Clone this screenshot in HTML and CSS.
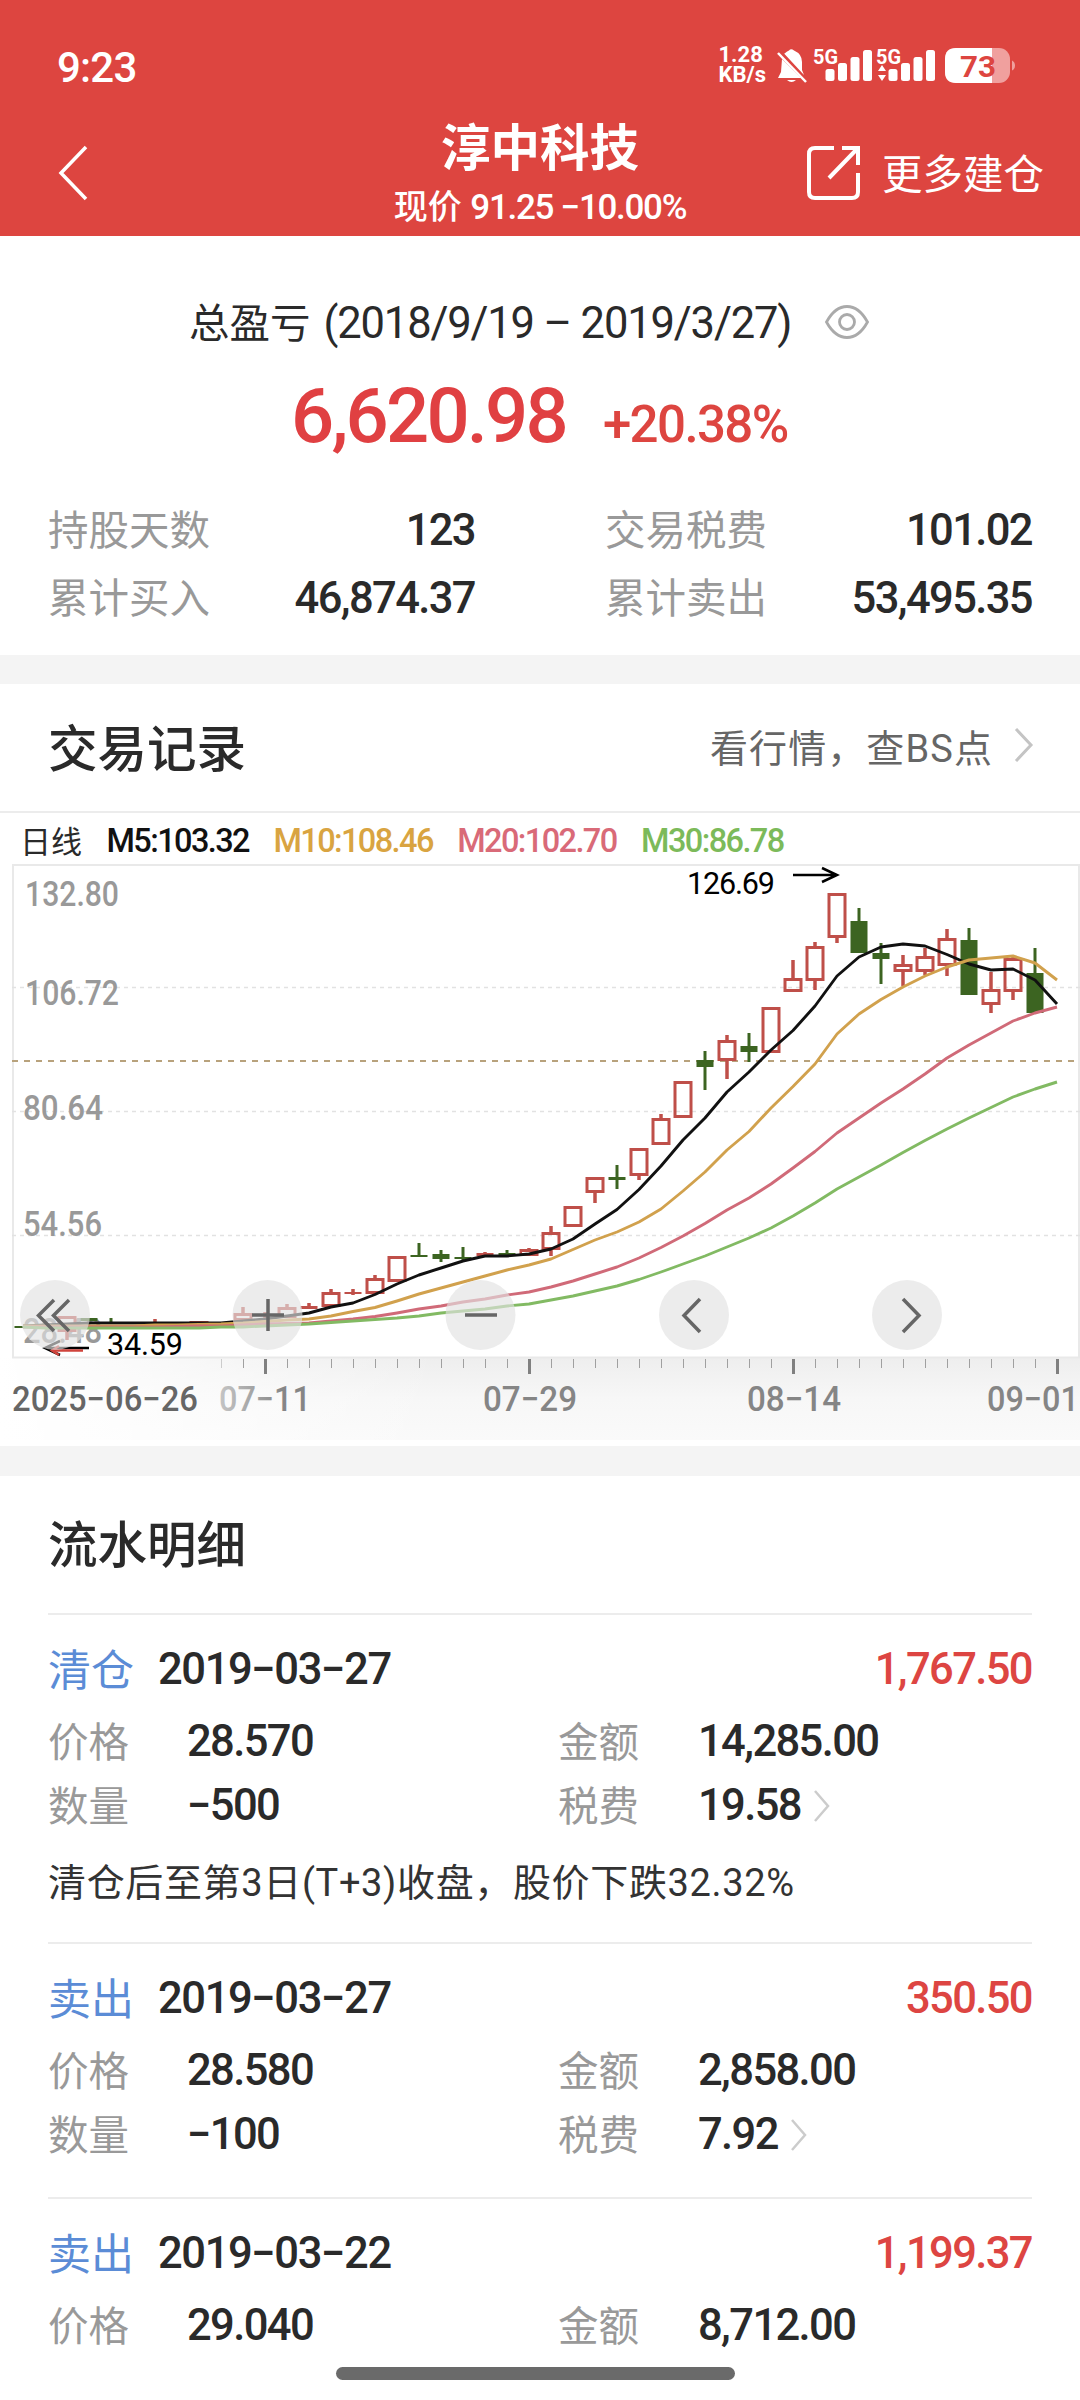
FILE: index.html
```
<!DOCTYPE html>
<html lang="zh-CN">
<head>
    <meta charset="UTF-8">
    <meta name="viewport" content="width=device-width, initial-scale=1.0">
    <title>淳中科技</title>
    <link rel="stylesheet" href="styles.css">
</head>
<body>

<header class="top">
    <div class="status">
        <span class="clock">9:23</span>
        <div class="status-icons">
            <div class="speed"><span>1.28</span><span>KB/s</span></div>
            <svg class="bell" width="32" height="36" viewBox="0 0 32 36">
                <path d="M8 6Q11 3 13 2.500Q15 0 18 2.500Q26 6 26 14V22L28 27L8.500 6Z" fill="#fff"/>
                <path d="M6 11L25 30H2L5 24Z" fill="#fff"/>
                <path d="M11 32H20Q15.500 36 11 32Z" fill="#fff"/>
                <path d="M2 5L30 34" stroke="#fff" stroke-width="2.500"/>
            </svg>
            <svg class="signal" width="126" height="36" viewBox="0 0 126 36" fill="#fff">
                <text class="net" x="1" y="16" textLength="25" lengthAdjust="spacingAndGlyphs">5G</text>
                <rect x="13.500" y="21" width="9" height="12" rx="2.500"/>
                <rect x="26" y="15" width="9" height="18" rx="2.500"/>
                <rect x="38.500" y="9" width="9" height="24" rx="2.500"/>
                <rect x="51" y="2" width="9" height="31" rx="2.500"/>
                <text class="net" x="64" y="16" textLength="25" lengthAdjust="spacingAndGlyphs">5G</text>
                <path d="M66 23L70 17L74 23ZM66 27L70 33L74 27Z"/>
                <rect x="76.500" y="21" width="9" height="12" rx="2.500"/>
                <rect x="89" y="15" width="9" height="18" rx="2.500"/>
                <rect x="101.500" y="9" width="9" height="24" rx="2.500"/>
                <rect x="114" y="2" width="9" height="31" rx="2.500"/>
            </svg>
            <svg class="battery" width="72" height="36" viewBox="0 0 72 36">
                <rect x="0" y="0" width="65" height="35" rx="11" fill="#f0a09e"/>
                <path d="M11 0H47V35H11Q0 35 0 24V11Q0 0 11 0Z" fill="#fff"/>
                <path d="M67 12.500Q70 14 70 17.500Q70 21 67 22.500Z" fill="#f0a09e"/>
                <text class="charge" x="15" y="28.500" textLength="36" lengthAdjust="spacingAndGlyphs">73</text>
            </svg>
        </div>
    </div>
    <div class="navbar">
        <svg class="back" width="36" height="56" viewBox="0 0 36 56" fill="none" stroke="#fff" stroke-width="3.500">
            <path d="M32 2L7 28L32 54"/>
        </svg>
        <div class="title">
            <h1>淳中科技</h1>
            <p>现价 <span class="quote">91.25 −10.00%</span></p>
        </div>
        <div class="more">
            <svg width="54" height="54" viewBox="0 0 54 54" fill="none" stroke="#fff" stroke-width="4">
                <path d="M27 2H8Q2 2 2 8V46Q2 52 8 52H45Q51 52 51 46V27"/>
                <path d="M35 2H51V19M50 3L22 32"/>
            </svg>
            <span>更多建仓</span>
        </div>
    </div>
</header>

<section class="summary">
    <div class="period">
        <span class="caption">总盈亏</span>
        <span class="range">(2018/9/19 – 2019/3/27)</span>
        <svg width="44" height="34" viewBox="0 0 44 34" fill="none" stroke="#aaa" stroke-width="2.800">
            <path d="M1.500 17Q10 1.500 22 1.500T42.500 17Q34 32.500 22 32.500T1.500 17Z"/>
            <circle cx="22" cy="17" r="7.500"/>
        </svg>
    </div>
    <div class="profit">
        <strong>6,620.98</strong>
        <span>+20.38%</span>
    </div>
    <div class="stats">
        <div class="stat"><span>持股天数</span><b>123</b></div>
        <div class="stat"><span>交易税费</span><b>101.02</b></div>
        <div class="stat"><span>累计买入</span><b>46,874.37</b></div>
        <div class="stat"><span>累计卖出</span><b>53,495.35</b></div>
    </div>
</section>

<section class="trades">
    <div class="section-head">
        <h2>交易记录</h2>
        <a class="market">看行情，查BS点
            <svg width="20" height="34" viewBox="0 0 20 34" fill="none" stroke="#c4c4c4" stroke-width="3"><path d="M2 1L17 17L2 33"/></svg>
        </a>
    </div>
    <div class="legend">
        <span class="kind">日线</span>
        <span class="m5">M5:103.32</span>
        <span class="m10">M10:108.46</span>
        <span class="m20">M20:102.70</span>
        <span class="m30">M30:86.78</span>
    </div>
    <svg class="chart" id="chart" width="1080" height="582" viewBox="0 864 1080 582">
        <defs>
            <linearGradient id="shade" x1="0" y1="0" x2="0" y2="1">
                <stop offset="0" stop-color="#eeeeee"/>
                <stop offset="0.500" stop-color="#f7f7f7"/>
                <stop offset="1" stop-color="#fafafa"/>
            </linearGradient>
            <linearGradient id="fade" x1="0" y1="0" x2="1" y2="0">
                <stop offset="0" stop-color="#fff"/>
                <stop offset="1" stop-color="#fff" stop-opacity="0"/>
            </linearGradient>
            <linearGradient id="label" gradientUnits="userSpaceOnUse" x1="220" y1="0" x2="285" y2="0">
                <stop offset="0" stop-color="#c4c4c4"/>
                <stop offset="1" stop-color="#858585"/>
            </linearGradient>
        </defs>
        <rect x="0" y="1358" width="1080" height="82" fill="url(#shade)"/>
        <rect x="0" y="1358" width="440" height="82" fill="url(#fade)"/>
        <rect x="13" y="865" width="1066" height="492.500" fill="none" stroke="#e9e9e9" stroke-width="2"/>
        <path class="grid" d="M12 987.500H1080M12 1111.500H1080M12 1235.500H1080"/>
        <path class="now" d="M12 1061H1078"/>
        <g class="scale">
            <text x="25" y="906" textLength="94" lengthAdjust="spacingAndGlyphs">132.80</text>
            <text x="25" y="1005" textLength="94" lengthAdjust="spacingAndGlyphs">106.72</text>
            <text x="23" y="1120" textLength="80" lengthAdjust="spacingAndGlyphs">80.64</text>
            <text x="23" y="1236" textLength="79" lengthAdjust="spacingAndGlyphs">54.56</text>
            <text x="23" y="1343" textLength="79" lengthAdjust="spacingAndGlyphs">28.48</text>
        </g>
        <g id="ticks"></g>
        <g id="candles"></g>
        <g id="lines" fill="none" stroke-width="2.900" stroke-linejoin="round"></g>
        <g class="extreme">
            <text x="687" y="894" textLength="88">126.69</text>
            <path d="M793 875H836M822 868L837 875L822 882"/>
            <path d="M89 1348H46M60 1341L45 1348L60 1355"/>
            <path class="sell-arrow" d="M83 1350.500H52M59 1346L52 1350.500L59 1355"/>
            <text x="107" y="1355" textLength="76">34.59</text>
        </g>
        <g class="dates">
            <text x="12" y="1411" textLength="186" lengthAdjust="spacingAndGlyphs" class="first">2025−06−26</text>
            <text x="219" y="1411" textLength="92" lengthAdjust="spacingAndGlyphs" fill="url(#label)">07−11</text>
            <text x="483" y="1411" textLength="94" lengthAdjust="spacingAndGlyphs">07−29</text>
            <text x="747" y="1411" textLength="94" lengthAdjust="spacingAndGlyphs">08−14</text>
            <text x="987" y="1411" textLength="92" lengthAdjust="spacingAndGlyphs">09−01</text>
        </g>
        <g class="knobs">
            <circle cx="55" cy="1315" r="35"/>
            <circle cx="267.500" cy="1315" r="35"/>
            <circle cx="480.500" cy="1315" r="35"/>
            <circle cx="694" cy="1315" r="35"/>
            <circle cx="907" cy="1315" r="35"/>
        </g>
        <path class="glyphs" d="M54 1300L38.500 1315.500L54 1331M69 1300L53.500 1315.500L69 1331
            M252 1315H284M268 1299V1331 M465 1315H497
            M700 1299L684 1315.500L700 1332 M903 1299L919 1315.500L903 1332"/>
    </svg>
</section>

<section class="details">
    <h2>流水明细</h2>

    <div class="record with-note">
        <div class="record-head"><em>清仓</em><span class="date">2019−03−27</span><b>1,767.50</b></div>
        <div class="fields">
            <span>价格</span><b>28.570</b><span>金额</span><b>14,285.00</b>
            <span>数量</span><b>−500</b><span>税费</span><b>19.58<svg width="18" height="32" viewBox="0 0 18 32"><path d="M2 1L15 16L2 31"/></svg></b>
        </div>
        <p class="note">清仓后至第3日(T+3)收盘，股价下跌32.32%</p>
    </div>

    <div class="record">
        <div class="record-head"><em>卖出</em><span class="date">2019−03−27</span><b>350.50</b></div>
        <div class="fields">
            <span>价格</span><b>28.580</b><span>金额</span><b>2,858.00</b>
            <span>数量</span><b>−100</b><span>税费</span><b>7.92<svg width="18" height="32" viewBox="0 0 18 32"><path d="M2 1L15 16L2 31"/></svg></b>
        </div>
    </div>

    <div class="record">
        <div class="record-head"><em>卖出</em><span class="date">2019−03−22</span><b>1,199.37</b></div>
        <div class="fields">
            <span>价格</span><b>29.040</b><span>金额</span><b>8,712.00</b>
        </div>
    </div>
</section>

<div class="home-bar"></div>

<script>
    const NS = 'http://www.w3.org/2000/svg';
    const RED = '#bf4f49';
    const GREEN = '#3c6421';
    const xAt = i => 23 + i * 22;

    // [index, up, body top, body bottom, high, low]
    const candles = [
        [0, 0, 1326, 1328, 1326, 1328], [2, 1, 1316, 1332, 1316, 1340],
        [3, 0, 1318, 1321, 1318, 1321], [4, 0, 1322, 1324, 1318, 1324],
        [6, 1, 1323, 1325, 1319, 1325], [8, 1, 1321, 1327, 1321, 1327],
        [10, 1, 1313, 1321, 1307, 1321], [11, 1, 1314, 1316, 1312, 1318],
        [12, 1, 1307, 1318, 1304, 1318], [13, 1, 1306, 1309, 1303, 1309],
        [14, 1, 1292, 1307, 1289, 1307], [15, 1, 1292, 1294, 1289, 1295],
        [16, 1, 1278, 1294, 1275, 1294], [17, 1, 1256, 1282, 1256, 1282],
        [18, 0, 1255, 1257, 1243, 1257], [19, 0, 1254, 1259, 1250, 1262],
        [20, 0, 1257, 1259, 1247, 1260], [21, 1, 1253, 1256, 1252, 1256],
        [22, 0, 1253, 1256, 1250, 1256], [23, 1, 1249, 1256, 1248, 1256],
        [24, 1, 1232, 1250, 1226, 1256], [25, 1, 1206, 1227, 1206, 1227],
        [26, 1, 1177, 1193, 1177, 1203], [27, 0, 1177, 1180, 1165, 1189],
        [28, 1, 1148, 1176, 1148, 1180], [29, 1, 1118, 1145, 1114, 1145],
        [30, 1, 1081, 1118, 1081, 1118], [31, 0, 1060, 1067, 1051, 1090],
        [32, 1, 1040, 1061, 1035, 1079], [33, 0, 1046, 1052, 1033, 1062],
        [34, 1, 1007, 1053, 1007, 1053], [35, 1, 978, 992, 960, 992],
        [36, 1, 946, 981, 942, 990], [37, 1, 893, 938, 893, 943],
        [38, 0, 921, 953, 908, 953], [39, 0, 953, 959, 943, 984],
        [40, 1, 964, 972, 955, 986], [41, 1, 956, 972, 948, 975],
        [42, 1, 938, 966, 929, 976], [43, 0, 940, 995, 928, 995],
        [44, 1, 989, 1005, 972, 1013], [45, 1, 958, 992, 956, 1000],
        [46, 0, 973, 1013, 948, 1013]
    ];

    const averages = [
        ['#111', [1326, 1325, 1324, 1323, 1323, 1323, 1323, 1323, 1323, 1323, 1321, 1319, 1316, 1313, 1307, 1303, 1294.5, 1284, 1275, 1268, 1261, 1256, 1256, 1254, 1249, 1239, 1224, 1209.5, 1189.5, 1166, 1140, 1118, 1092, 1072, 1050, 1030.5, 1006, 976, 957, 947, 944, 946, 954.5, 964, 970, 969, 980, 1004]],
        ['#d1a14d', [1326, 1326, 1326, 1326, 1326, 1326, 1325, 1325, 1324.5, 1324, 1323, 1321.5, 1320, 1319, 1316, 1311.5, 1307.5, 1301, 1294, 1288, 1282, 1276, 1270, 1265, 1259, 1249.5, 1240, 1232, 1222, 1209, 1191, 1172, 1150, 1131.5, 1108, 1086.5, 1064, 1034, 1014, 999.5, 987, 976, 967, 960, 958, 956, 963, 980]],
        ['#d06a78', [1327, 1327, 1327, 1327, 1327, 1327, 1327, 1326.5, 1326, 1326, 1325, 1324, 1323.5, 1323, 1321, 1319, 1316.5, 1313, 1309, 1306, 1302, 1299, 1295, 1292, 1287, 1281, 1274, 1267, 1258, 1247.5, 1236, 1223.5, 1210, 1198, 1184, 1168, 1151.5, 1133, 1118, 1103, 1089, 1074, 1058, 1045, 1033, 1021, 1013, 1007]],
        ['#82ba63', [1327, 1328, 1328, 1328, 1328, 1328, 1328, 1328, 1328, 1327, 1327, 1326, 1325, 1324, 1322.5, 1321, 1319.5, 1318, 1316, 1313, 1311, 1309, 1306, 1304, 1300, 1296, 1291, 1286, 1279.5, 1272, 1264, 1256, 1247, 1238, 1228, 1216, 1203, 1189, 1177, 1165, 1152.5, 1140.5, 1129, 1118, 1107.5, 1097, 1089, 1082]]
    ];

    function add(parent, tag, attrs) {
        const el = document.createElementNS(NS, tag);
        for (const key in attrs) el.setAttribute(key, attrs[key]);
        document.getElementById(parent).appendChild(el);
    }

    candles.forEach(([i, up, top, bottom, high, low]) => {
        const x = xAt(i);
        const color = up ? RED : GREEN;
        if (high < top) add('candles', 'path', { d: `M${x} ${high}V${top}`, stroke: color, 'stroke-width': up ? 3.5 : 3 });
        if (low > bottom) add('candles', 'path', { d: `M${x} ${bottom}V${low}`, stroke: color, 'stroke-width': up ? 3.5 : 3 });
        if (up && bottom - top > 5) {
            add('candles', 'rect', { x: x - 8, y: top + 1.5, width: 16, height: bottom - top - 3, fill: 'none', stroke: color, 'stroke-width': 3 });
        } else {
            add('candles', 'rect', { x: x - 8.5, y: top, width: 17, height: bottom - top, fill: color });
        }
    });

    averages.forEach(([color, ys]) => {
        add('lines', 'polyline', { points: ys.map((y, i) => `${xAt(i)},${y}`).join(' '), stroke: color });
    });

    // every 12th trading day gets a long tick
    for (let i = 9; i < 48; i++) {
        const major = i % 12 === 11;
        add('ticks', 'path', { d: `M${xAt(i) + 0.5} 1359V${major ? 1374 : 1368}`, stroke: major ? '#808080' : (i === 9 ? '#ccc' : '#a0a0a0'), 'stroke-width': major ? 3 : 1 });
    }
</script>

</body>
</html>
```
FILE: styles.css
```
* {
    box-sizing: border-box;
}
body {
    margin: 0;
    width: 1080px;
    height: 2400px;
    overflow: hidden;
    position: relative;
    background-color: #fff;
    color: #2a2a2a;
    font-family: Roboto, "Noto Sans CJK SC", sans-serif;
}
h1, h2, p {
    margin: 0;
    font-weight: 500;
}
b, strong {
    font-weight: 500;
}

/* header */
.top {
    height: 236px;
    background-color: #dd4540;
    color: #fff;
}
.status {
    height: 132px;
    padding: 0 63px 0 57px;
    display: flex;
    justify-content: space-between;
    align-items: center;
}
.clock {
    font-size: 42px;
    font-weight: 500;
    letter-spacing: -0.800px;
    margin-top: 2px;
}
.status-icons {
    display: flex;
    align-items: center;
}
.speed {
    display: flex;
    flex-direction: column;
    font-size: 22px;
    font-weight: 700;
    line-height: 20px;
    margin: -2px 10px 0 -2px;
}
.bell {
    margin: 0 4px 0 0;
}
.signal {
    overflow: visible;
}
.battery {
    margin: -1px 0 0 7px;
}
.net {
    font-size: 20px;
    font-weight: 700;
}
.charge {
    font-size: 30px;
    font-weight: 700;
    fill: #dd4540;
}
.navbar {
    height: 104px;
    padding: 0 37px 0 54px;
    display: grid;
    grid-template-columns: 300px 1fr 300px;
    align-items: center;
}
.back {
    margin-top: -22px;
}
.title {
    text-align: center;
    margin-left: -17px;
}
.title h1 {
    font-size: 49.500px;
    line-height: 54px;
    font-weight: 700;
    margin-top: -16px;
}
.title p {
    font-size: 34px;
    line-height: 46px;
    margin-top: 8px;
    white-space: nowrap;
}
.quote {
    font-size: 35px;
    letter-spacing: -1.3px;
}
.more {
    display: flex;
    align-items: center;
    justify-content: flex-end;
    gap: 21px;
    margin: -22px -1px 0 0;
    font-size: 40.500px;
}
.more span {
    margin-top: -4px;
}

/* profit summary */
.summary {
    height: 419px;
    padding: 50px 48px 0;
}
.period {
    display: flex;
    align-items: center;
    height: 74px;
    padding-left: 141px;
    font-size: 40.500px;
}
.caption {
    margin-top: -5px;
}
.range {
    font-size: 43.500px;
    letter-spacing: -1.150px;
    margin-left: 13px;
}
.period svg {
    margin-left: 34px;
    margin-top: -2px;
}
.profit {
    display: flex;
    align-items: baseline;
    height: 104px;
    line-height: 112px;
    padding-left: 243px;
    color: #e04042;
}
.profit strong {
    font-size: 76px;
    letter-spacing: -2.800px;
}
.profit span {
    font-size: 51px;
    font-weight: 500;
    letter-spacing: -1.600px;
    margin-left: 37px;
    color: #dd4540;
}
.stats {
    display: grid;
    grid-template-columns: 427px 427px;
    column-gap: 130px;
    grid-auto-rows: 68px;
    margin-top: 33px;
}
.stat {
    display: flex;
    justify-content: space-between;
    align-items: center;
    line-height: 68px;
}
.stat span, .fields span {
    color: #999;
    font-size: 40.500px;
}
.stat b, .record b, .date {
    font-size: 43.500px;
    font-weight: 500;
    letter-spacing: -1.600px;
}
.date {
    letter-spacing: -1.400px;
}

/* chart */
.trades {
    border-top: 29px solid #f4f4f4;
}
.section-head {
    display: flex;
    justify-content: space-between;
    align-items: center;
    height: 129px;
    padding: 0 46px 5px 48px;
    border-bottom: 2px solid #ececec;
}
h2 {
    font-size: 49.500px;
}
.market {
    display: flex;
    align-items: center;
    gap: 21px;
    font-size: 38px;
    letter-spacing: 1.100px;
    color: #666;
}
.legend {
    display: flex;
    align-items: center;
    height: 51px;
    padding: 4px 0 0 20px;
    font-size: 32.500px;
    font-weight: 500;
    letter-spacing: -1.600px;
    white-space: nowrap;
    gap: 24.500px;
}
.kind {
    font-size: 31px;
    font-weight: 400;
    letter-spacing: 0;
    margin-top: -3px;
}
.m5 {
    color: #111;
}
.m10 {
    color: #d9a441;
}
.m20 {
    color: #d96a78;
}
.m30 {
    color: #7cba5a;
}
.chart {
    display: block;
}
.grid {
    stroke: #e2e2e2;
    stroke-width: 1.500;
    stroke-dasharray: 4 4;
}
.now {
    stroke: #b8a27c;
    stroke-width: 2;
    stroke-dasharray: 6 6;
}
.scale text, .dates text {
    font-size: 35px;
    font-weight: 500;
}
.scale {
    fill: #999;
}
.dates {
    fill: #858585;
}
.dates .first {
    fill: #666;
}
.extreme text {
    font-size: 30.500px;
    fill: #000;
}
.extreme path {
    fill: none;
    stroke: #000;
    stroke-width: 2.500;
}
.extreme .sell-arrow {
    stroke: #d0443c;
}
.knobs {
    fill: #e2e2e2;
    fill-opacity: 0.650;
}
.glyphs {
    fill: none;
    stroke: #666;
    stroke-width: 3.500;
}

/* records */
.details {
    border-top: 30px solid #f4f4f4;
    padding: 0 48px;
}
.details h2 {
    height: 137px;
    line-height: 141px;
}
.record {
    height: 255px;
    border-top: 2px solid #ececec;
    padding-top: 22px;
}
.record.with-note {
    height: 329px;
}
.record-head {
    display: flex;
    align-items: center;
    height: 62px;
}
.record-head em {
    font-style: normal;
    font-size: 43px;
    margin-top: -2px;
    color: #5b8cd6;
}
.record-head .date {
    margin: 3px 0 0 24px;
}
.record-head b {
    margin: 3px 0 0 auto;
    color: #dd4542;
}
.fields {
    display: grid;
    grid-template-columns: 139px 371px 140px 1fr;
    grid-auto-rows: 64px;
    align-items: center;
    margin-top: 9px;
}
.fields span {
    margin-top: -1px;
}
.fields b {
    display: flex;
    align-items: center;
    margin-top: 3px;
}
.fields svg {
    margin-left: 12px;
    fill: none;
    stroke: #ccc;
    stroke-width: 2.500;
}
.note {
    font-size: 38px;
    font-weight: 400;
    line-height: 94px;
    letter-spacing: 0.650px;
    color: #333;
}

.home-bar {
    position: absolute;
    left: 336px;
    top: 2367px;
    width: 399px;
    height: 13px;
    border-radius: 7px;
    background-color: #6a6a6a;
}
```
